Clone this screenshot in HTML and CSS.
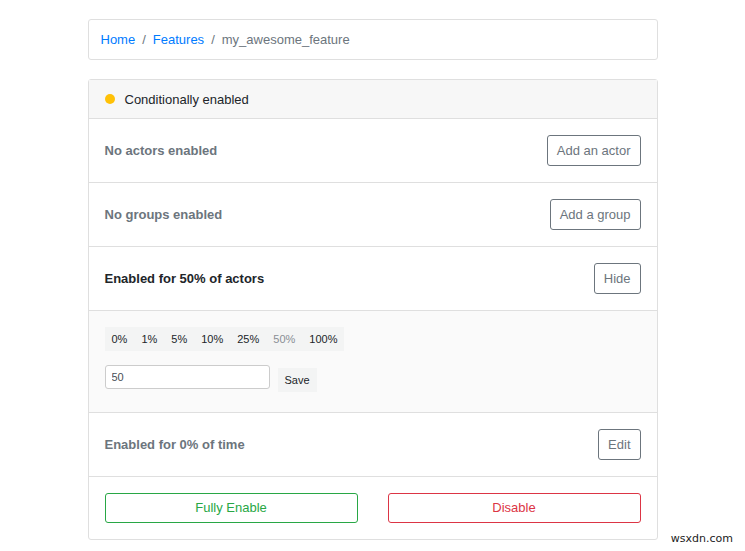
FILE: index.html
```html
<!DOCTYPE html>
<html lang="en">
<head>
  <meta charset="UTF-8" />
  <title>my_awesome_feature</title>
  <link rel="stylesheet" href="styles.css">
</head>
<body>
  <div class="container">
    <nav class="crumbs"><a href="#">Home</a><span class="sep">/</span><a href="#">Features</a><span class="sep">/</span><span class="current">my_awesome_feature</span></nav>

    <div class="card">
      <div class="card-header">
        <span class="status-dot"></span>
        Conditionally enabled
      </div>

      <div class="row">
        <span class="row-title muted">No actors enabled</span>
        <button class="btn">Add an actor</button>
      </div>

      <div class="row">
        <span class="row-title muted">No groups enabled</span>
        <button class="btn">Add a group</button>
      </div>

      <div class="row">
        <span class="row-title">Enabled for 50% of actors</span>
        <button class="btn">Hide</button>
      </div>

      <!-- percentage of actors -->
      <div class="pct-panel">
        <div class="pct-group">
          <button class="pct">0%</button>
          <button class="pct">1%</button>
          <button class="pct">5%</button>
          <button class="pct">10%</button>
          <button class="pct">25%</button>
          <button class="pct active">50%</button>
          <button class="pct">100%</button>
        </div>
        <form class="pct-form">
          <input type="text" class="pct-input" value="50">
          <button type="button" class="pct save">Save</button>
        </form>
      </div>

      <div class="row">
        <span class="row-title muted">Enabled for 0% of time</span>
        <button class="btn">Edit</button>
      </div>

      <div class="row actions">
        <button class="btn btn-wide btn-green">Fully Enable</button>
        <button class="btn btn-wide btn-red">Disable</button>
      </div>
    </div>
  </div>

  <span class="watermark">wsxdn.com</span>
</body>
</html>
```

FILE: styles.css
```css
* { box-sizing: border-box; }
body {
  font-family: "Liberation Sans", Arial, sans-serif;
  font-size: 13px;
  line-height: 1.5;
  margin: 0;
  padding: 19px 0 10px;
  background: #fff;
  color: #212529;
}

.container {
  width: 570px;
  margin: 0 auto;
}

/* breadcrumb */
.crumbs {
  display: flex;
  border: 1px solid #dfdfdf;
  border-radius: 3px;
  padding: 10px 12px 9px;
  margin-bottom: 19px;
  color: #6c757d;
}
.crumbs a {
  color: #007bff;
  text-decoration: none;
}
.crumbs .sep {
  padding: 0 7px;
}

/* feature card */
.card {
  border: 1px solid #dfdfdf;
  border-radius: 3px;
}
.card-header {
  display: flex;
  align-items: center;
  gap: 10px;
  background: #f7f7f7;
  padding: 10px 16px 9px;
  border-bottom: 1px solid #dfdfdf;
}
.status-dot {
  width: 10px;
  height: 10px;
  border-radius: 50%;
  background: #ffc107;
}

.row {
  display: flex;
  align-items: center;
  justify-content: space-between;
  padding: 16px;
  border-bottom: 1px solid #dfdfdf;
}
.row:last-child { border-bottom: 0; }
.row-title {
  font-weight: 700;
  color: #212529;
}
.row-title.muted { color: #6c757d; }

.btn {
  font: inherit;
  line-height: 19px;
  color: #6c757d;
  background: #fff;
  border: 1px solid #6c757d;
  border-radius: 3px;
  padding: 5px 9px;
  cursor: pointer;
}

.actions { gap: 30px; }
.btn-wide {
  flex: 1;
  line-height: 18px;
  padding: 5px 9px;
}
.btn-green { color: #28a745; border-color: #28a745; }
.btn-red { color: #dc3545; border-color: #dc3545; }

/* percentage panel */
.pct-panel {
  background: #fafafa;
  padding: 16px 16px 20px;
  border-bottom: 1px solid #dfdfdf;
}
.pct-group {
  display: inline-flex;
  background: #f3f4f4;
}
.pct {
  font: inherit;
  font-size: 11px;
  line-height: 16px;
  color: #212529;
  background: #f3f4f4;
  border: 0;
  padding: 4px 7px;
  cursor: pointer;
}
.pct.active { color: #8a8f94; }

.pct-form {
  display: flex;
  align-items: flex-start;
  gap: 8px;
  margin-top: 14px;
}
.pct-input {
  width: 165px;
  height: 24px;
  font: inherit;
  font-size: 11px;
  color: #495057;
  border: 1px solid #ccc;
  border-radius: 3px;
  padding: 2px 6px;
  background: #fff;
}
.pct.save {
  margin-top: 3px;
}

.watermark {
  position: absolute;
  right: 12px;
  bottom: 4px;
  font-family: "DejaVu Sans", sans-serif;
  font-size: 11px;
  color: #222;
}
```
